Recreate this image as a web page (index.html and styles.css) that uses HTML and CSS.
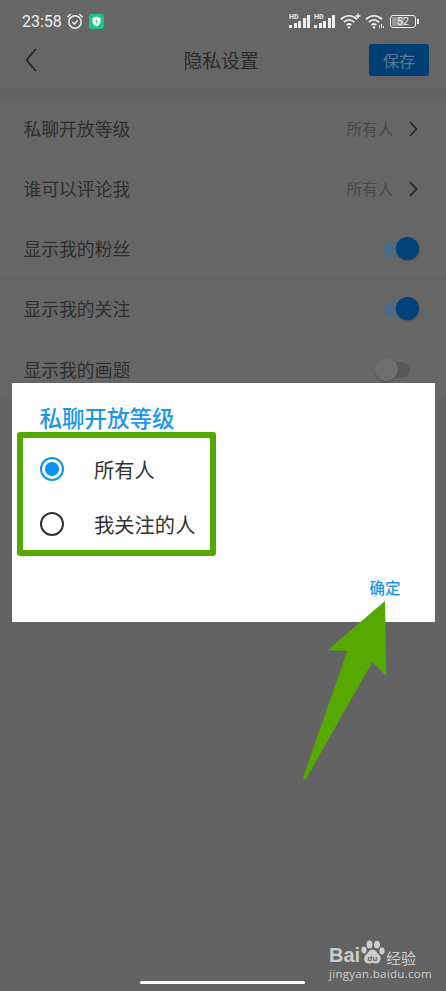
FILE: index.html
```html
<!DOCTYPE html>
<html>
  <head>
    <meta charset="utf-8">
    <title>隐私设置</title>
    <link rel="stylesheet" href="styles.css">
  </head>
  <body>
    <div class="screen">
      <div class="statusbar">
        <span class="time">23:58</span>
        <svg class="alarm" width="18" height="18" viewBox="0 0 18 18" fill="none" stroke="#eee" stroke-width="1.5">
          <circle cx="9" cy="10" r="6.2"/>
          <path d="M6.3 10l2 2 3.4-3.6"/>
          <path d="M1.5 5.2L4.6 2M16.5 5.2L13.4 2"/>
        </svg>
        <svg class="shield" width="15" height="15" viewBox="0 0 15 15">
          <rect width="15" height="15" rx="3" fill="#1cc58e"/>
          <path d="M7.5 2.6l4 1.4v3.2c0 2.5-1.7 4.2-4 5.2-2.3-1-4-2.7-4-5.2V4z" fill="#fff"/>
          <path d="M8 4.8L6 8h1.4L7 10.2 9 7H7.6z" fill="#1cc58e"/>
        </svg>
        <span class="spacer"></span>
        <div class="signal"><span class="hd">HD</span><i class="b1"></i><i class="b2"></i><i class="b3"></i><i class="b4"></i><i class="b5"></i></div>
        <div class="signal"><span class="hd">HD</span><i class="b1"></i><i class="b2"></i><i class="b3"></i><i class="b4"></i><i class="b5"></i></div>
        <svg class="wifi" width="21" height="16" viewBox="0 0 21 16" fill="none" stroke="#eee" stroke-width="1.8">
          <path d="M1 6.2c5-4.4 11-4.4 16 0"/>
          <path d="M3.8 9.2c3.4-3 7-3 10.4 0"/>
          <path d="M6.6 12c1.6-1.3 3.2-1.3 4.8 0"/>
          <circle cx="9" cy="14.4" r="1.2" fill="#eee" stroke="none"/>
          <path d="M18 .5v5M15.5 3h5" stroke-width="1.4"/>
        </svg>
        <svg class="wifi2" width="20" height="16" viewBox="0 0 20 16" fill="none" stroke="#eee" stroke-width="1.8">
          <path d="M1 6.2c5-4.4 11-4.4 16 0"/>
          <path d="M3.8 9.2c3.4-3 7-3 10.4 0"/>
          <path d="M6.6 12c1.6-1.3 3.2-1.3 4.8 0"/>
          <circle cx="9" cy="14.4" r="1.2" fill="#eee" stroke="none"/>
          <path d="M14.5 15v-3M16.5 15v-4M18.5 15v-2" stroke-width="1"/>
        </svg>
        <div class="battery"><span class="level"></span><span class="num">52</span></div>
        <span class="nub"></span>
      </div>

      <div class="navbar">
        <svg class="back" width="12" height="24" viewBox="0 0 12 24" fill="none" stroke="#262626" stroke-width="1.8">
          <path d="M11 1L1.5 12 11 23"/>
        </svg>
        <span class="nav-title">隐私设置</span>
        <span class="save">保存</span>
      </div>

      <div class="list">
        <div class="row">
          <span class="row-label">私聊开放等级</span>
          <span class="row-value">所有人</span>
          <svg class="chevron" width="9" height="16" viewBox="0 0 9 16" fill="none" stroke="#262626" stroke-width="1.7"><path d="M1 1l6.5 7L1 15"/></svg>
        </div>
        <div class="row">
          <span class="row-label">谁可以评论我</span>
          <span class="row-value">所有人</span>
          <svg class="chevron" width="9" height="16" viewBox="0 0 9 16" fill="none" stroke="#262626" stroke-width="1.7"><path d="M1 1l6.5 7L1 15"/></svg>
        </div>
        <div class="row">
          <span class="row-label">显示我的粉丝</span>
          <span class="switch on"><span class="thumb"></span></span>
        </div>
        <div class="row">
          <span class="row-label">显示我的关注</span>
          <span class="switch on"><span class="thumb"></span></span>
        </div>
        <div class="row">
          <span class="row-label">显示我的画题</span>
          <span class="switch off"><span class="thumb"></span></span>
        </div>
      </div>

      <div class="dialog">
        <h2 class="dialog-title">私聊开放等级</h2>
        <div class="highlight">
          <div class="option">
            <span class="radio checked"></span>
            <span class="option-label">所有人</span>
          </div>
          <div class="option">
            <span class="radio"></span>
            <span class="option-label">我关注的人</span>
          </div>
        </div>
        <div class="dialog-actions"><span class="confirm">确定</span></div>
      </div>

      <svg class="arrow" width="446" height="991" viewBox="0 0 446 991">
        <path d="M385 601L327.7 650 347.3 651 303 777.5Q303.6 780 306 779L372.3 662.3 386.3 676.3z" fill="#55a800"/>
      </svg>

      <div class="watermark">
        <div class="wm-top">
          <span class="wm-bai">Bai</span>
          <svg class="wm-paw" width="28" height="26" viewBox="0 0 28 26" fill="#ccc">
            <ellipse cx="6" cy="10" rx="2.6" ry="3.4"/>
            <ellipse cx="11.5" cy="4.4" rx="3" ry="3.9"/>
            <ellipse cx="19" cy="4.6" rx="3" ry="3.9"/>
            <ellipse cx="24" cy="11" rx="2.6" ry="3.4"/>
            <path d="M14.5 9.5c3 0 4 3 6.500 5 2.500 2 2.500 8-2.500 9-2 .3-3-.5-4-.5s-2.500.9-4.500.5c-5-1-4.500-7-2-9 2.500-2 3.500-5 6.500-5z"/>
            <text x="14.500" y="21" text-anchor="middle" class="wm-du">du</text>
          </svg>
          <span class="wm-jy">经验</span>
        </div>
        <div class="wm-url">jingyan.baidu.com</div>
      </div>

      <div class="home-bar"></div>
    </div>
  </body>
</html>
```

FILE: styles.css
```css
* {
  box-sizing: border-box;
}

body {
  margin: 0;
  background: #666;
  font-family: "Noto Sans CJK SC", "Noto Sans", sans-serif;
}

.screen {
  position: relative;
  width: 446px;
  height: 991px;
  overflow: hidden;
  background: #636363;
}

/* status bar */
.statusbar {
  display: flex;
  align-items: center;
  height: 42px;
  padding: 0 27px 0 22px;
  background: #666;
  color: #eee;
}

.time {
  font-family: Roboto, sans-serif;
  font-size: 16px;
  width: 44px;
}

.alarm {
  margin-right: 5px;
}

.spacer {
  flex: 1;
}

.signal {
  position: relative;
  display: flex;
  align-items: flex-end;
  gap: 1.5px;
  width: 21px;
  height: 14px;
  margin-right: 4px;
}

.signal i {
  display: block;
  width: 3px;
  background: #eee;
}

.signal .b1 { height: 3px; }
.signal .b2 { height: 5px; }
.signal .b3 { height: 7px; }
.signal .b4 { height: 10px; }
.signal .b5 { height: 13px; }

.hd {
  position: absolute;
  left: 0;
  top: -1px;
  font-family: Roboto, sans-serif;
  font-size: 7px;
  font-weight: 700;
  line-height: 8px;
}

.wifi {
  margin: 0 4px 0 1px;
}

.wifi2 {
  margin-right: 5px;
}

.battery {
  position: relative;
  width: 26px;
  height: 13px;
  border: 1px solid #eee;
  border-radius: 3px;
  font-family: Roboto, sans-serif;
  font-size: 10.5px;
  line-height: 11px;
  text-align: center;
}

.level {
  position: absolute;
  left: 1px;
  top: 1px;
  bottom: 1px;
  width: 12px;
  background: #999;
  border-radius: 1px;
}

.num {
  position: relative;
}

.nub {
  width: 2px;
  height: 5px;
  margin-left: 1px;
  background: #eee;
}

/* nav */
.navbar {
  display: flex;
  align-items: center;
  justify-content: space-between;
  height: 46px;
  padding: 0 17px 10px 25px;
  background: #666;
}

.nav-title {
  font-size: 18.800px;
  line-height: 26px;
  margin-left: 36px;
  color: #2b2b2b;
}

.save {
  width: 60px;
  height: 32px;
  background: #003f73;
  border-radius: 3px;
  color: #5a7b96;
  font-size: 16px;
  line-height: 32px;
  text-align: center;
}

/* settings list */
.list {
  margin-top: 11px;
  background: #666;
}

.row {
  display: flex;
  align-items: center;
  height: 60.250px;
  padding: 0 28px 0 23.500px;
  border-bottom: 1px solid #626262;
}

.row-label {
  flex: 1;
  padding-bottom: 2px;
  font-size: 17.800px;
  color: #2f2f2f;
}

.row-value {
  font-size: 15.700px;
  color: #484848;
  margin-right: 15.500px;
}

.chevron {
  display: block;
}

.switch {
  position: relative;
  display: block;
  height: 16px;
}

.switch.on {
  width: 35px;
  margin-right: 0;
  background: #4f6a80;
  border-radius: 8px;
}

.switch.off {
  width: 26px;
  margin-right: 8px;
  background: #585858;
  border-radius: 8px;
}

.thumb {
  position: absolute;
  top: -4px;
  width: 23px;
  height: 23px;
  border-radius: 50%;
  box-shadow: 0 1px 2px rgba(0, 0, 0, 0.25);
}

.switch.on .thumb {
  right: -1px;
  background: #004279;
}

.switch.off .thumb {
  left: -9px;
  background: #6e6e6e;
}

/* dialog */
.dialog {
  position: absolute;
  left: 11.500px;
  top: 383px;
  width: 423px;
  height: 239px;
  padding: 20px 0 0 5px;
  background: #fff;
}

.dialog-title {
  margin: 0 0 1px 23px;
  font-size: 22.500px;
  font-weight: 500;
  line-height: 28px;
  color: #1a96f0;
}

.highlight {
  width: 199px;
  height: 124px;
  border: 6px solid #55a800;
  border-radius: 3px;
  padding: 4px 0 0 17.500px;
}

.option {
  display: flex;
  align-items: center;
  height: 54.500px;
}

.radio {
  width: 24px;
  height: 24px;
  margin-right: 30px;
  border: 2px solid #333;
  border-radius: 50%;
}

.radio.checked {
  border-color: #0c92f5;
  background: radial-gradient(circle, #0c92f5 0 6.500px, #fff 7.500px);
}

.option-label {
  font-size: 20.300px;
  color: #333;
}

.dialog-actions {
  display: flex;
  justify-content: flex-end;
  padding: 19px 34px 0 0;
}

.confirm {
  font-size: 15.500px;
  font-weight: 500;
  line-height: 24px;
  color: #1a96f0;
}

.arrow {
  position: absolute;
  left: 0;
  top: 0;
}

/* watermark */
.watermark {
  position: absolute;
  left: 329px;
  top: 939px;
  width: 92px;
  color: #ccc;
}

.wm-top {
  display: flex;
  align-items: flex-end;
  height: 28px;
}

.wm-bai {
  font-family: "Liberation Sans", sans-serif;
  font-size: 20px;
  font-weight: 700;
  line-height: 23px;
  width: 29px;
}

.wm-paw {
  margin-bottom: 1px;
}

.wm-du {
  font-family: "Liberation Sans", sans-serif;
  font-size: 8px;
  font-weight: 700;
  fill: #666;
}

.wm-jy {
  font-size: 15px;
  line-height: 22px;
  margin-bottom: -2px;
}

.wm-url {
  font-family: "Open Sans", sans-serif;
  font-size: 11.500px;
  line-height: 16px;
  letter-spacing: 0.300px;
  white-space: nowrap;
  margin-top: -1px;
}

.home-bar {
  position: absolute;
  left: 140px;
  bottom: 7px;
  width: 165px;
  height: 3px;
  border-radius: 2px;
  background: #fff;
}
```
